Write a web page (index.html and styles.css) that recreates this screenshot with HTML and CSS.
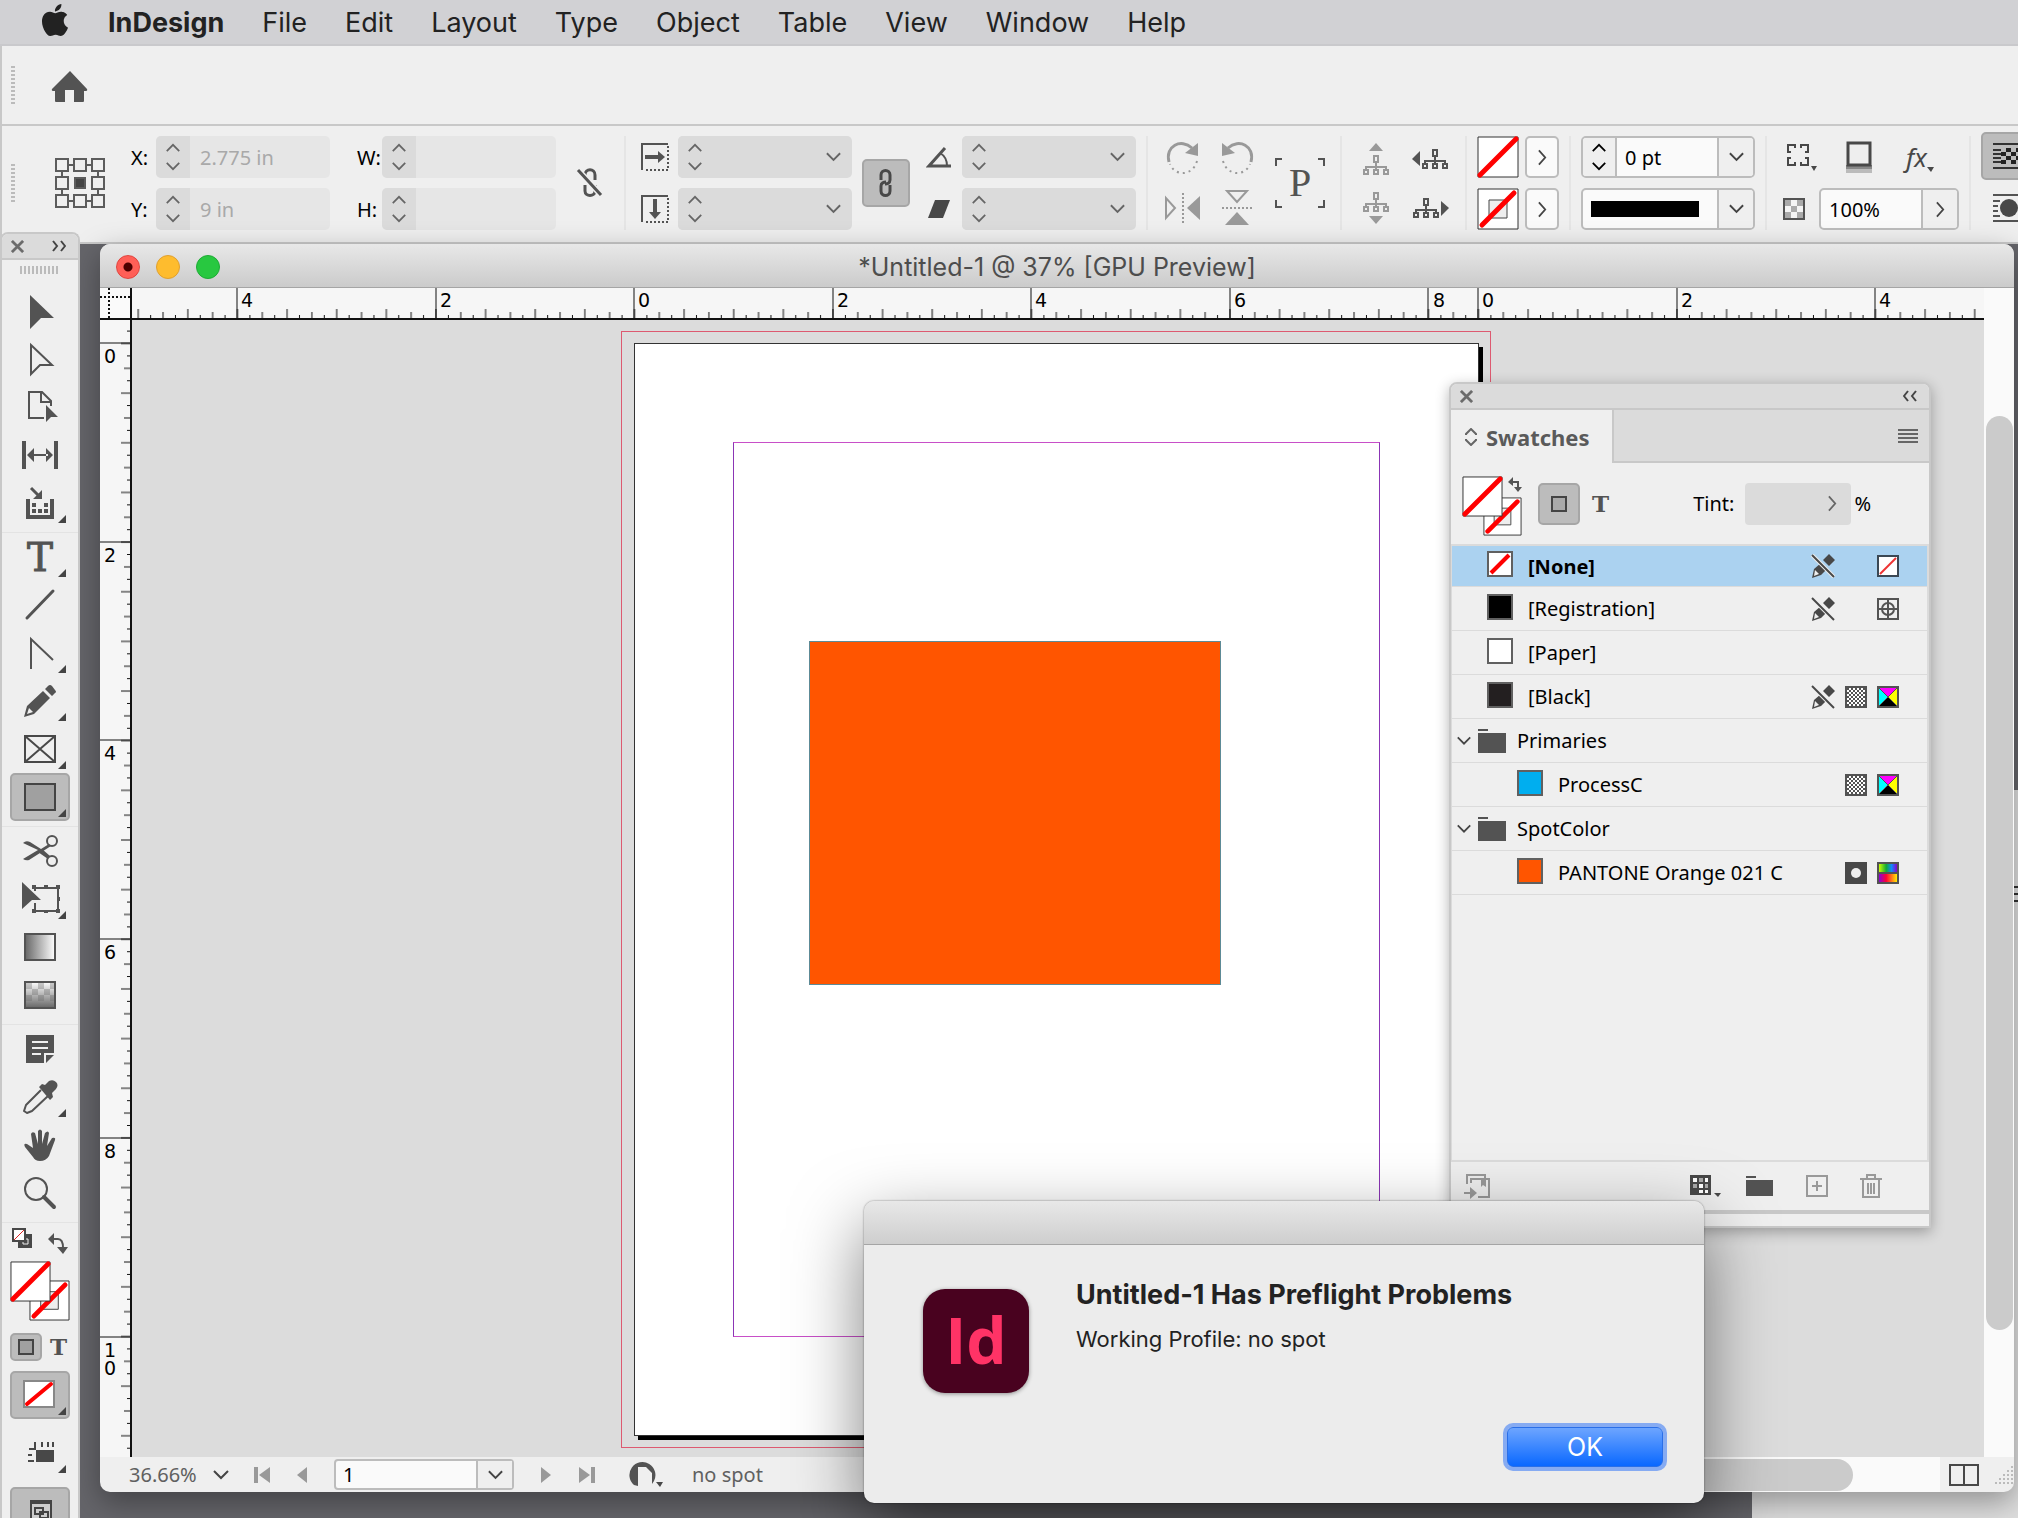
FILE: index.html
```html
<!DOCTYPE html>
<html lang="en">
<head>
    <meta charset="UTF-8">
    <meta name="viewport" content="width=device-width, initial-scale=1.0">
    <title>InDesign</title>
    <link rel="stylesheet" href="styles.css">
</head>
<body>
    <!-- shared symbols -->
    <svg class="defs" aria-hidden="true">
        <defs>
            <symbol id="up" viewBox="0 0 18 10"><path d="M2 9l7-7 7 7" fill="none" stroke="currentColor" stroke-width="2"/></symbol>
            <symbol id="down" viewBox="0 0 18 10"><path d="M2 1l7 7 7-7" fill="none" stroke="currentColor" stroke-width="2"/></symbol>
            <symbol id="right" viewBox="0 0 10 18"><path d="M1 1l7 8-7 8" fill="none" stroke="currentColor" stroke-width="2"/></symbol>
            <symbol id="corner" viewBox="0 0 8 8"><path d="M8 0v8H0z" fill="#444"/></symbol>
            <symbol id="close" viewBox="0 0 14 14"><path d="M1 1l12 12M13 1L1 13" stroke="#6b6b6b" stroke-width="3"/></symbol>
            <symbol id="folder" viewBox="0 0 28 24"><path d="M0 0h10v2H0zM0 4h28v20H0z" fill="#535353"/></symbol>
            <symbol id="locked" viewBox="0 0 24 24">
                <path d="M18 0l6 6-6 6-6-6zM10 9l6 6-6 6-9 3 2-9z" fill="currentColor"/>
                <path d="M4 16l4 4-5 2z" fill="#eee"/>
                <path d="M1 1l22 22" stroke="#efefef" stroke-width="4"/>
                <path d="M1 1l22 22" stroke="currentColor" stroke-width="2"/>
            </symbol>
            <pattern id="dither" width="4" height="4" patternUnits="userSpaceOnUse"><path d="M0 0h2v2H0zM2 2h2v2H2z" fill="#535353"/></pattern>
            <symbol id="process" viewBox="0 0 22 22"><path d="M1 1h20v20H1z" fill="#fff"/><path d="M1 1h20v20H1z" fill="url(#dither)" stroke="#535353" stroke-width="2"/></symbol>
            <symbol id="cmyk" viewBox="0 0 22 22">
                <path d="M1 1h20L11 11z" fill="#f0f"/><path d="M21 1v20L11 11z" fill="#ff0"/><path d="M1 21h20L11 11z" fill="#000"/><path d="M1 1v20l10-10z" fill="#0ff"/>
                <path d="M1 1l20 20M21 1L1 21" stroke="#535353" stroke-width="1"/><path d="M1 1h20v20H1z" fill="none" stroke="#535353" stroke-width="2"/>
            </symbol>
            <symbol id="tree" viewBox="0 0 26 20"><path d="M11 1h4v6h-4zM13 7v6M3 15v-3h20v3M1 15h4v4H1zM11 15h4v4h-4zM21 15h4v4h-4zM13 12v3" fill="none" stroke="currentColor" stroke-width="2"/></symbol>
            <symbol id="chain" viewBox="0 0 16 30"><path d="M3 12V7c0-6 9-6 9 0v5c0 3-3 4-5 4M12 17v6c0 6-9 6-9 0v-5c0-3 3-4 5-4" fill="none" stroke="#484848" stroke-width="3"/></symbol>
            <symbol id="fill-none" viewBox="0 0 42 42"><path d="M1 1h40v40H1z" fill="#fff" stroke="#333"/><path d="M3 39L39 3" stroke="#f00" stroke-width="5" stroke-linecap="round"/></symbol>
            <symbol id="stroke-none" viewBox="0 0 42 42"><path d="M1 1h40v40H1z" fill="#fff" stroke="#333"/><path d="M12 12h18v18H12z" fill="#eee" stroke="#444"/><path d="M5 37L37 5" stroke="#f00" stroke-width="5" stroke-linecap="round"/></symbol>
            <pattern id="ticks-x" width="99.25" height="30" x="502.5" patternUnits="userSpaceOnUse">
                <path d="M0 21v9M12.4 27v3M24.8 24v6M37.2 27v3M49.6 21v9M62 27v3M74.4 24v6M86.8 27v3M99.2 21v9" stroke="#111"/>
            </pattern>
            <pattern id="ticks-x2" width="99.25" height="30" x="1346.5" patternUnits="userSpaceOnUse">
                <path d="M0 21v9M12.4 27v3M24.8 24v6M37.2 27v3M49.6 21v9M62 27v3M74.4 24v6M86.8 27v3M99.2 21v9" stroke="#111"/>
            </pattern>
            <pattern id="ticks-y" width="30" height="99.3" y="23.5" patternUnits="userSpaceOnUse">
                <path d="M21 0h9M27 12.4h3M24 24.8h6M27 37.2h3M21 49.6h9M27 62h3M24 74.4h6M27 86.8h3M21 99.2h9" stroke="#111"/>
            </pattern>
        </defs>
    </svg>

    <header class="menubar">
        <svg class="apple" viewBox="0 0 24 24"><path d="M12.152 6.896c-.948 0-2.415-1.078-3.96-1.04-2.04.027-3.91 1.183-4.961 3.014-2.117 3.675-.546 9.103 1.519 12.09 1.013 1.454 2.208 3.09 3.792 3.039 1.52-.065 2.09-.987 3.935-.987 1.831 0 2.35.987 3.96.948 1.637-.026 2.676-1.48 3.676-2.948 1.156-1.688 1.636-3.325 1.662-3.415-.039-.013-3.182-1.221-3.22-4.857-.026-3.04 2.48-4.494 2.597-4.559-1.429-2.09-3.623-2.324-4.39-2.376-2-.156-3.675 1.09-4.61 1.09zM15.53 3.83c.843-1.012 1.4-2.427 1.245-3.83-1.207.052-2.662.805-3.532 1.818-.78.896-1.454 2.338-1.273 3.714 1.338.104 2.715-.688 3.559-1.701"/></svg>
        <nav class="menus">
            <a href="#" class="app-name">InDesign</a>
            <a href="#">File</a>
            <a href="#">Edit</a>
            <a href="#">Layout</a>
            <a href="#">Type</a>
            <a href="#">Object</a>
            <a href="#">Table</a>
            <a href="#">View</a>
            <a href="#">Window</a>
            <a href="#">Help</a>
        </nav>
    </header>

    <div class="app-bar">
        <div class="grip"></div>
        <button class="home" aria-label="Home"><svg width="38" height="32" viewBox="0 0 38 32"><path d="M19 0L1 18q-1 2 2 2h1v10q0 1 1 1h9V19h9v12h9q1 0 1-1V20h1q3 0 2-2z" fill="#535353"/></svg></button>
    </div>

    <div class="control-bar">
        <div class="grip"></div>
        <svg class="ref-point" width="52" height="52" viewBox="0 0 52 52" fill="none" stroke="#5c5c5c" stroke-width="2">
            <path d="M2 2h12v12H2zM20 2h12v12H20zM38 2h12v12H38zM2 20h12v12H2zM38 20h12v12H38zM2 38h12v12H2zM20 38h12v12H20zM38 38h12v12H38zM14 8h6M32 8h6M14 44h6M32 44h6M8 14v6M8 32v6M44 14v6M44 32v6"/>
            <path d="M21 21h10v10H21z" fill="#444" stroke="#5c5c5c"/>
        </svg>
        <div class="rows position">
            <div class="labeled"><label for="pos-x">X:</label>
                <div class="field off"><span class="stepper"><button aria-label="Up"><svg><use href="#up"/></svg></button><button aria-label="Down"><svg><use href="#down"/></svg></button></span><input id="pos-x" value="2.775 in" disabled></div></div>
            <div class="labeled"><label for="pos-y">Y:</label>
                <div class="field off"><span class="stepper"><button aria-label="Up"><svg><use href="#up"/></svg></button><button aria-label="Down"><svg><use href="#down"/></svg></button></span><input id="pos-y" value="9 in" disabled></div></div>
        </div>
        <div class="rows size">
            <div class="labeled"><label for="size-w">W:</label>
                <div class="field off"><span class="stepper"><button aria-label="Up"><svg><use href="#up"/></svg></button><button aria-label="Down"><svg><use href="#down"/></svg></button></span><input id="size-w" disabled></div></div>
            <div class="labeled"><label for="size-h">H:</label>
                <div class="field off"><span class="stepper"><button aria-label="Up"><svg><use href="#up"/></svg></button><button aria-label="Down"><svg><use href="#down"/></svg></button></span><input id="size-h" disabled></div></div>
        </div>
        <button class="unlink" aria-label="Constrain proportions">
            <svg width="28" height="32" viewBox="0 0 28 32" fill="none"><path d="M9 12V8c0-7 10-7 10 0v5M19 18v6c0 6-10 6-10 0v-6" stroke="#535353" stroke-width="3"/><path d="M2 3l23 25" stroke="#efefef" stroke-width="6"/><path d="M2 3l23 25" stroke="#535353" stroke-width="3"/></svg>
        </button>
        <div class="sep"></div>

        <div class="rows scale">
            <div class="labeled wide"><label for="scale-x" aria-label="Scale X"><svg width="28" height="28" viewBox="0 0 28 28" fill="none" stroke="#535353" stroke-width="2"><path d="M27 1H1v26"/><path d="M27 3v24H3" stroke-dasharray="2 2"/><path d="M4 14h14" stroke-width="4"/><path d="M17 8l7 6-7 6z" fill="#535353" stroke="none"/></svg></label>
                <div class="field combo off"><span class="stepper"><button aria-label="Up"><svg><use href="#up"/></svg></button><button aria-label="Down"><svg><use href="#down"/></svg></button></span><input id="scale-x" disabled><button class="drop" aria-label="Choose"><svg><use href="#down"/></svg></button></div></div>
            <div class="labeled wide"><label for="scale-y" aria-label="Scale Y"><svg width="28" height="28" viewBox="0 0 28 28" fill="none" stroke="#535353" stroke-width="2"><path d="M27 1H1v26"/><path d="M27 3v24H3" stroke-dasharray="2 2"/><path d="M14 4v14" stroke-width="4"/><path d="M8 17l6 7 6-7z" fill="#535353" stroke="none"/></svg></label>
                <div class="field combo off"><span class="stepper"><button aria-label="Up"><svg><use href="#up"/></svg></button><button aria-label="Down"><svg><use href="#down"/></svg></button></span><input id="scale-y" disabled><button class="drop" aria-label="Choose"><svg><use href="#down"/></svg></button></div></div>
        </div>
        <button class="toggle chain" aria-label="Constrain scaling"><svg width="16" height="30"><use href="#chain"/></svg></button>
        <div class="rows angle">
            <div class="labeled wide"><label for="rotate" aria-label="Rotation angle"><svg width="26" height="22" viewBox="0 0 26 22" fill="none" stroke="#535353"><path d="M19 2L3 20h22" stroke-width="3"/><path d="M14 7q7 4 7 13" stroke-width="2"/></svg></label>
                <div class="field combo off"><span class="stepper"><button aria-label="Up"><svg><use href="#up"/></svg></button><button aria-label="Down"><svg><use href="#down"/></svg></button></span><input id="rotate" disabled><button class="drop" aria-label="Choose"><svg><use href="#down"/></svg></button></div></div>
            <div class="labeled wide"><label for="shear" aria-label="Shear"><svg width="26" height="20" viewBox="0 0 26 20"><path d="M9 1h15l-7 18H2z" fill="#484848"/></svg></label>
                <div class="field combo off"><span class="stepper"><button aria-label="Up"><svg><use href="#up"/></svg></button><button aria-label="Down"><svg><use href="#down"/></svg></button></span><input id="shear" disabled><button class="drop" aria-label="Choose"><svg><use href="#down"/></svg></button></div></div>
        </div>
        <div class="sep"></div>

        <div class="icon-grid">
            <button aria-label="Rotate clockwise"><svg width="36" height="36" viewBox="0 0 36 36" fill="none" stroke="#999"><path d="M4 22C0 6 16-2 27 8" stroke-width="3"/><path d="M33 3v13l-13-3z" fill="#999" stroke="none"/><path d="M32 21c-4 15-22 16-27 3" stroke-width="2" stroke-dasharray="2 4"/></svg></button>
            <button aria-label="Rotate counterclockwise"><svg width="36" height="36" viewBox="0 0 36 36" fill="none" stroke="#999"><path d="M32 22C36 6 20-2 9 8" stroke-width="3"/><path d="M3 3v13l13-3z" fill="#999" stroke="none"/><path d="M4 21c4 15 22 16 27 3" stroke-width="2" stroke-dasharray="2 4"/></svg></button>
            <button aria-label="Flip horizontal"><svg width="36" height="36" viewBox="0 0 36 36" fill="none" stroke="#999" stroke-width="2"><path d="M1 8v20l9-10z"/><path d="M18 3v32" stroke-dasharray="2 2"/><path d="M35 6v24L22 18z" fill="#999" stroke="none"/></svg></button>
            <button aria-label="Flip vertical"><svg width="36" height="36" viewBox="0 0 36 36" fill="none" stroke="#999" stroke-width="2"><path d="M8 1h20l-10 11z"/><path d="M3 18h32" stroke-dasharray="2 2"/><path d="M6 35h24L18 22z" fill="#999" stroke="none"/></svg></button>
        </div>
        <div class="para">
            <svg width="52" height="52" viewBox="0 0 52 52" fill="none" stroke="#535353" stroke-width="2"><path d="M2 9V2h6M44 2h6v7M50 43v7h-6M8 50H2v-7"/></svg>
            <span>P</span>
        </div>
        <div class="sep"></div>

        <div class="icon-grid trees">
            <button class="dim" aria-label="Select container"><svg width="34" height="34" viewBox="0 0 34 34"><path d="M10 9l7-8 7 8z" fill="#999"/><use href="#tree" x="4" y="13" width="26" height="20"/></svg></button>
            <button aria-label="Select previous object"><svg width="38" height="34" viewBox="0 0 38 34"><path d="M9 9v15l-8-7z" fill="#535353"/><use href="#tree" x="11" y="7" width="26" height="20"/></svg></button>
            <button class="dim" aria-label="Select content"><svg width="34" height="34" viewBox="0 0 34 34"><use href="#tree" x="4" y="2" width="26" height="20"/><path d="M10 26l7 8 7-8z" fill="#999"/></svg></button>
            <button aria-label="Select next object"><svg width="38" height="34" viewBox="0 0 38 34"><use href="#tree" x="2" y="8" width="26" height="20"/><path d="M30 11v15l8-8z" fill="#535353"/></svg></button>
        </div>
        <div class="sep"></div>

        <div class="rows paint">
            <div class="pair"><svg width="42" height="42"><use href="#fill-none"/></svg><button class="more" aria-label="Fill"><svg><use href="#right"/></svg></button></div>
            <div class="pair"><svg width="42" height="42"><use href="#stroke-none"/></svg><button class="more" aria-label="Stroke"><svg><use href="#right"/></svg></button></div>
        </div>
        <div class="sep"></div>

        <div class="rows stroke">
            <div class="field combo"><span class="stepper"><button aria-label="Up"><svg><use href="#up"/></svg></button><button aria-label="Down"><svg><use href="#down"/></svg></button></span><input aria-label="Stroke weight" value="0 pt"><button class="drop" aria-label="Choose"><svg><use href="#down"/></svg></button></div>
            <button class="field stroke-type" aria-label="Stroke type"><span class="line"></span><span class="drop"><svg><use href="#down"/></svg></span></button>
        </div>
        <div class="sep"></div>

        <div class="rows effects">
            <div class="effect-icons">
                <button aria-label="Corner options"><svg width="32" height="30" viewBox="0 0 32 30" fill="none" stroke="#484848"><path d="M2 3h20v20H2z" stroke-width="2"/><path d="M9 3h6M9 23h6M2 10v6M22 10v6" stroke="#efefef" stroke-width="3"/><path d="M9 2v4M15 2v4M9 20v4M15 20v4M1 10h4M1 16h4M19 10h4M19 16h4" stroke-width="2"/><path d="M25 24h6l-3 5z" fill="#484848" stroke="none"/></svg></button>
                <button aria-label="Drop shadow"><svg width="28" height="32" viewBox="0 0 28 32"><path d="M1 24h26v8H1z" fill="#bbb"/><path d="M1 24h26v4H1z" fill="#888"/><path d="M3 2h22v22H3z" fill="#eee" stroke="#484848" stroke-width="3"/></svg></button>
                <button class="fx" aria-label="Effects">fx<svg width="7" height="5" viewBox="0 0 7 5"><path d="M0 0h7L4 5z" fill="#484848"/></svg></button>
            </div>
            <div class="opacity">
                <label for="opacity" aria-label="Opacity"><svg width="24" height="24" viewBox="0 0 24 24"><path d="M2 2h20v20H2z" fill="#f4f4f4" stroke="#535353" stroke-width="2"/><path d="M3 3h6v6H3zM15 3h6v6h-6zM9 9h6v6H9zM3 15h6v6H3zM15 15h6v6h-6z" fill="#aaa"/></svg></label>
                <div class="field"><input id="opacity" value="100%"><button class="drop" aria-label="Opacity slider"><svg class="side"><use href="#right"/></svg></button></div>
            </div>
        </div>
        <div class="sep"></div>

        <div class="wrap">
            <button class="toggle" aria-label="No text wrap"><svg width="40" height="28" viewBox="0 0 40 28" stroke="#333" stroke-width="2"><path d="M1 2h38M1 8h38M1 12h38M1 16h38M1 20h38M1 26h38"/><path d="M9 6h20v16H9z" fill="#222" stroke="none"/><path d="M9 6h5v4H9zM19 6h5v4h-5zM14 10h5v4h-5zM24 10h5v4h-5zM9 14h5v4H9zM19 14h5v4h-5zM14 18h5v4h-5zM24 18h5v4h-5z" fill="#bbb" stroke="none"/></svg></button>
            <button class="plain" aria-label="Wrap around object"><svg width="40" height="30" viewBox="0 0 40 30" stroke="#535353" stroke-width="2"><path d="M1 2h38M1 8h7M1 13h5M1 18h5M1 23h7M1 28h38"/><circle cx="17" cy="15" r="9" fill="#484848" stroke="none"/></svg></button>
        </div>
    </div>

    <main class="desktop">
        <div class="back-panel"><svg width="6" height="20" viewBox="0 0 6 20"><path d="M0 2h6M0 9h6M0 16h6" stroke="#333" stroke-width="2"/></svg></div>

        <section class="document">
            <div class="title-bar">
                <div class="lights"><button class="red" aria-label="Close"></button><button class="yellow" aria-label="Minimize"></button><button class="green" aria-label="Zoom"></button></div>
                <h1>*Untitled-1 @ 37% [GPU Preview]</h1>
            </div>
            <div class="view">
                <svg class="origin" viewBox="0 0 32 32"><path d="M0 9h30M9 0v30" stroke="#111" stroke-width="2" stroke-dasharray="2 2"/><path d="M0 31h32M31 0v32" stroke="#111" stroke-width="2"/></svg>
                <svg class="ruler ruler-x">
                    <rect width="1346" height="30" fill="url(#ticks-x)"/>
                    <rect x="1346" width="100%" height="30" fill="url(#ticks-x2)"/>
                    <path d="M105 0v30M304 0v30M502 0v30M701 0v30M899 0v30M1098 0v30M1296 0v30M1346 0v30M1545 0v30M1743 0v30" stroke="#111"/>
                    <text x="109" y="19">4</text><text x="308" y="19">2</text><text x="506" y="19">0</text><text x="705" y="19">2</text><text x="903" y="19">4</text><text x="1102" y="19">6</text><text x="1301" y="19">8</text><text x="1350" y="19">0</text><text x="1549" y="19">2</text><text x="1747" y="19">4</text>
                </svg>
                <div class="rail"></div>
                <svg class="ruler ruler-y">
                    <rect width="30" height="100%" fill="url(#ticks-y)"/>
                    <path d="M0 23h30M0 222h30M0 420h30M0 619h30M0 818h30M0 1017h30" stroke="#111"/>
                    <text x="4" y="43">0</text><text x="4" y="242">2</text><text x="4" y="440">4</text><text x="4" y="639">6</text><text x="4" y="838">8</text><text x="4" y="1037">1</text><text x="4" y="1055">0</text>
                </svg>
                <div class="canvas">
                    <div class="bleed"></div>
                    <div class="page"></div>
                    <div class="margins"></div>
                    <div class="shape"></div>
                </div>
                <div class="scroll-y"><div class="thumb"></div></div>
            </div>
            <footer class="status">
                <select aria-label="Zoom level"><option>36.66%</option></select>
                <button class="first" aria-label="First page"><svg width="18" height="18" viewBox="0 0 18 18"><path d="M1 1h4v16H1zM17 1v16L6 9z" fill="#999"/></svg></button>
                <button class="prev" aria-label="Previous page"><svg width="10" height="18" viewBox="0 0 10 18"><path d="M10 1v16L0 9z" fill="#999"/></svg></button>
                <div class="page-number"><input aria-label="Page" value="1"><button class="drop" aria-label="Choose page"><svg><use href="#down"/></svg></button></div>
                <button class="next" aria-label="Next page"><svg width="10" height="18" viewBox="0 0 10 18"><path d="M0 1v16l10-8z" fill="#999"/></svg></button>
                <button class="last" aria-label="Last page"><svg width="18" height="18" viewBox="0 0 18 18"><path d="M13 1h4v16h-4zM1 1v16l11-8z" fill="#999"/></svg></button>
                <button class="preflight" aria-label="Preflight"><svg width="36" height="28" viewBox="0 0 36 28"><path d="M6 24A13 13 0 1 1 26 20l-2 3V12l-6-6H10v19z" fill="#535353"/><path d="M11 8h6v7h6v8l-2 2H11z" fill="#efefef"/><path d="M19 8l5 5h-5z" fill="#efefef"/><path d="M28 21h7l-3 5z" fill="#484848"/></svg></button>
                <span class="profile">no spot</span>
                <div class="scroll-x"><div class="thumb"></div></div>
                <button class="split" aria-label="Split view"><svg width="30" height="24" viewBox="0 0 30 24"><path d="M1 2h28v20H1zM15 2v20" fill="none" stroke="#484848" stroke-width="2"/></svg></button>
                <svg class="resize" width="20" height="20" viewBox="0 0 20 20"><path d="M18 1v18M14 5v14M10 9v10M6 13v6M2 17v2" stroke="#bbb" stroke-width="2" stroke-dasharray="2 2"/></svg>
            </footer>
        </section>

        <aside class="toolbox">
            <div class="toolbox-head"><button aria-label="Close"><svg width="13" height="13"><use href="#close"/></svg></button><button aria-label="Collapse"><svg width="14" height="12" viewBox="0 0 14 12"><path d="M1 1l4 5-4 5M9 1l4 5-4 5" fill="none" stroke="#444" stroke-width="2"/></svg></button></div>
            <div class="drag"></div>
            <div class="tools">
                <button aria-label="Selection"><svg viewBox="-10 -4 60 48"><path d="M10 4l24 23H21L10 38z" fill="#535353"/></svg></button>
                <button aria-label="Direct selection"><svg viewBox="-10 -4 60 48"><path d="M11 6l21 20H20l-9 9z" fill="none" stroke="#535353" stroke-width="2"/></svg></button>
                <button aria-label="Page"><svg viewBox="-10 -4 60 48"><path d="M24 31H9V5h13l9 9v5M21 5v10h10" fill="none" stroke="#535353" stroke-width="2"/><path d="M26 18l12 12h-7l-5 5z" fill="#535353"/></svg></button>
                <button aria-label="Gap"><svg viewBox="-10 -4 60 48"><path d="M2 6h4v28H2zM34 6h4v28h-4zM7 20l7-7v14zM33 20l-7-7v14zM12 19h16v2H12z" fill="#535353"/></svg></button>
                <button aria-label="Content collector"><svg viewBox="-10 -4 60 48"><path d="M8 16v18h24V16" fill="none" stroke="#535353" stroke-width="4"/><path d="M11 5l8 8" stroke="#535353" stroke-width="3"/><path d="M22 7v9h-9zM12 20h4v4h-4zM24 20h4v4h-4zM12 26h4v4h-4zM18 26h4v4h-4zM24 26h4v4h-4z" fill="#535353"/><use href="#corner" x="38" y="32" width="8" height="8"/></svg></button>
            </div>
            <div class="tools">
                <button class="type" aria-label="Type"><svg viewBox="-10 -4 60 48"><text x="20" y="34" text-anchor="middle" font-size="39">T</text><use href="#corner" x="38" y="32" width="8" height="8"/></svg></button>
                <button aria-label="Line"><svg viewBox="-10 -4 60 48"><path d="M7 33L33 6" stroke="#535353" stroke-width="3" stroke-linecap="round"/></svg></button>
                <button aria-label="Pen"><svg viewBox="-10 -4 60 48"><path d="M11 36V6l22 21" fill="none" stroke="#535353" stroke-width="2"/><use href="#corner" x="38" y="32" width="8" height="8"/></svg></button>
                <button aria-label="Pencil"><svg viewBox="-10 -4 60 48"><path d="M28 5q2-2 4 0l3 4q2 2 0 3l-3 3-7-7zM23 10l7 7-16 16-10 3 3-11z" fill="#535353"/><path d="M9 27l4 4-6 2z" fill="#efefef"/><use href="#corner" x="38" y="32" width="8" height="8"/></svg></button>
                <button aria-label="Rectangle frame"><svg viewBox="-10 -4 60 48"><path d="M5 7h30v26H5zM5 7l30 26M35 7L5 33" fill="none" stroke="#484848" stroke-width="2"/><use href="#corner" x="38" y="32" width="8" height="8"/></svg></button>
                <button class="active" aria-label="Rectangle"><svg viewBox="-10 -4 60 48"><path d="M5 7h30v26H5z" fill="#a0a0a0" stroke="#444" stroke-width="2"/><use href="#corner" x="38" y="32" width="8" height="8"/></svg></button>
            </div>
            <div class="tools">
                <button aria-label="Scissors"><svg viewBox="-10 -4 60 48" fill="none" stroke="#535353"><circle cx="32" cy="10" r="5" stroke-width="2"/><circle cx="32" cy="30" r="5" stroke-width="2"/><path d="M3 12q3-3 7-1l11 7 8-5 2 2-22 14q-3 1-6-1l15-9zM22 18l8 7-2 3-10-7z" fill="#535353" stroke="none"/></svg></button>
                <button aria-label="Free transform"><svg viewBox="-10 -4 60 48"><path d="M15 12V9h23v23H15v-8" fill="none" stroke="#535353" stroke-width="2"/><path d="M12 6h4v4h-4zM24 6h4v3h-4zM36 6h4v4h-4zM37 18h3v4h-3zM36 30h4v4h-4zM24 31h4v3h-4zM12 30h4v4h-4z" fill="#535353"/><path d="M2 3l19 18h-9l-10 9z" fill="#535353"/><use href="#corner" x="38" y="32" width="8" height="8"/></svg></button>
                <button aria-label="Gradient swatch"><svg viewBox="-10 -4 60 48"><linearGradient id="grad"><stop stop-color="#666"/><stop offset="1" stop-color="#fff"/></linearGradient><path d="M5 7h30v26H5z" fill="url(#grad)" stroke="#535353" stroke-width="2"/></svg></button>
                <button aria-label="Gradient feather"><svg viewBox="-10 -4 60 48"><linearGradient id="feather" x2="0" y2="1"><stop stop-color="#666" stop-opacity="0"/><stop offset="1" stop-color="#666"/></linearGradient><path d="M5 7h30v26H5z" fill="#fff"/><path d="M6 8h6v6H6zM18 8h6v6h-6zM30 8h4v6h-4zM12 14h6v6h-6zM24 14h6v6h-6zM6 20h6v6H6zM18 20h6v6h-6zM30 20h4v6h-4z" fill="#ccc"/><path d="M5 7h30v26H5z" fill="url(#feather)" stroke="#535353" stroke-width="2"/></svg></button>
            </div>
            <div class="tools">
                <button aria-label="Note"><svg viewBox="-10 -4 60 48"><path d="M6 6h28v18H24v10H6z" fill="#535353"/><path d="M12 13h16M12 19h16M12 25h9" stroke="#efefef" stroke-width="2"/><path d="M26 26h8l-8 8z" fill="#535353"/></svg></button>
                <button aria-label="Eyedropper"><svg viewBox="-10 -4 60 48"><path d="M21 13L6 28l-2 6 3 2 5-2 16-15" fill="none" stroke="#535353" stroke-width="2" stroke-linejoin="round"/><path d="M19 10l3-3 3 1 4-4q4-2 7 1t0 7l-4 4 1 4-3 3z" fill="#535353"/><use href="#corner" x="38" y="32" width="8" height="8"/></svg></button>
                <button aria-label="Hand"><svg viewBox="-10 -4 60 48"><path d="M13 32L5 22q-2-4 2-3l6 4-2-14q1-3 4-1l3 11V6q2-3 4 0v13l3-11q3-3 4 0l-2 13 5-8q4-1 3 2l-6 16q-3 5-9 5-5 0-7-4z" fill="#535353"/></svg></button>
                <button aria-label="Zoom"><svg viewBox="-10 -4 60 48"><circle cx="16" cy="16" r="11" fill="none" stroke="#535353" stroke-width="2"/><path d="M24 24l10 10" stroke="#535353" stroke-width="4" stroke-linecap="round"/></svg></button>
            </div>
            <div class="tools colors">
                <div class="color-head">
                    <button aria-label="Default fill and stroke"><svg width="20" height="20" viewBox="0 0 20 20"><path d="M6 6h14v14H6z" fill="#484848"/><path d="M11 11h5v5h-5z" fill="none" stroke="#eee"/><path d="M1 1h12v12H1z" fill="#fff" stroke="#484848" stroke-width="2"/><path d="M2 12L12 2" stroke="#d22" stroke-width="1"/></svg></button>
                    <button aria-label="Swap fill and stroke"><svg width="22" height="22" viewBox="0 0 22 22"><path d="M5 6h6q5 0 5 9" fill="none" stroke="#535353" stroke-width="2"/><path d="M1 6l6-6v12zM10 14h11l-5 7z" fill="#535353"/></svg></button>
                </div>
                <svg class="swatch-pair" viewBox="0 0 60 60"><use href="#stroke-none" x="19" y="19" width="41" height="41"/><use href="#fill-none" width="41" height="41"/></svg>
                <div class="color-target">
                    <button class="toggle" aria-label="Container"><svg width="18" height="18" viewBox="0 0 18 18"><path d="M2 2h14v14H2z" fill="#a0a0a0" stroke="#444" stroke-width="2"/></svg></button>
                    <button class="letter">T</button>
                </div>
                <button class="active apply" aria-label="Apply none"><svg viewBox="0 0 60 48"><path d="M14 10h30v26H14z" fill="#fff" stroke="#888" stroke-width="2"/><path d="M17 33l24-20" stroke="#f00" stroke-width="4" stroke-linecap="round"/><use href="#corner" x="48" y="36" width="8" height="8"/></svg></button>
                <button class="view-options" aria-label="View options"><svg viewBox="0 0 60 48"><path d="M26 21h18v12H26zM24 13h2v8h-7v-2h5zM31 13h2v5h-2zM37 13h2v5h-2zM42 13h2v5h-2zM18 25h4v2h-4zM18 31h6v2h-6z" fill="#484848"/><use href="#corner" x="48" y="36" width="8" height="8"/></svg></button>
                <button class="active" aria-label="Screen mode"><svg viewBox="0 0 60 48"><path d="M21 14h20v24H21z" fill="#ccc" stroke="#444" stroke-width="2"/><path d="M20 13h22v4H20z" fill="#444"/><path d="M25 21h8v6h-8zM30 25h8v6h-8z" fill="none" stroke="#444" stroke-width="2"/></svg></button>
            </div>
        </aside>

        <section class="swatches">
            <div class="panel-head"><button aria-label="Close"><svg width="13" height="13"><use href="#close"/></svg></button><button aria-label="Collapse"><svg width="14" height="12" viewBox="0 0 14 12"><path d="M5 1L1 6l4 5M13 1L9 6l4 5" fill="none" stroke="#444" stroke-width="2"/></svg></button></div>
            <div class="tab-row">
                <h2 class="tab"><svg width="12" height="18" viewBox="0 0 12 18"><path d="M1 7V6l5-5 5 5v1M1 11v1l5 5 5-5v-1" fill="none" stroke="#666" stroke-width="2"/></svg>Swatches</h2>
                <button class="panel-menu" aria-label="Panel menu"><svg width="20" height="14" viewBox="0 0 20 14"><path d="M0 1h20M0 5h20M0 9h20M0 13h20" stroke="#666" stroke-width="2"/></svg></button>
            </div>
            <div class="tint-row">
                <svg class="mini-pair" width="62" height="60" viewBox="0 0 62 60"><use href="#stroke-none" x="21" y="21" width="39" height="39"/><use href="#fill-none" width="41" height="41"/><path d="M50 6h6v6" fill="none" stroke="#535353" stroke-width="2"/><path d="M46 6l5-5v9zM52 11h8l-4 5z" fill="#535353"/></svg>
                <button class="toggle" aria-label="Container"><svg width="16" height="16" viewBox="0 0 16 16"><path d="M1 1h14v14H1z" fill="#aaa" stroke="#444" stroke-width="2"/></svg></button>
                <button class="letter">T</button>
                <label for="tint">Tint:</label>
                <div class="tint-field"><input id="tint" disabled><button aria-label="Tint slider"><svg><use href="#right"/></svg></button></div>
                <span>%</span>
            </div>
            <ul class="swatch-list">
                <li class="selected"><span class="chip none"><svg viewBox="0 0 22 22"><path d="M2 20L20 2" stroke="#f00" stroke-width="4"/></svg></span><span class="name">[None]</span><svg class="lock"><use href="#locked"/></svg><i></i><svg viewBox="0 0 22 22"><path d="M1 1h20v20H1z" fill="#fff" stroke="#3b4854" stroke-width="2"/><path d="M3 19L19 3" stroke="#e33" stroke-width="2"/></svg></li>
                <li><span class="chip registration"></span><span class="name">[Registration]</span><svg class="lock"><use href="#locked"/></svg><i></i><svg viewBox="0 0 22 22" fill="none" stroke="#535353" stroke-width="2"><path d="M1 1h20v20H1zM11 1v20M1 11h20"/><circle cx="11" cy="11" r="6"/></svg></li>
                <li><span class="chip paper"></span><span class="name">[Paper]</span></li>
                <li><span class="chip black"></span><span class="name">[Black]</span><svg class="lock"><use href="#locked"/></svg><svg><use href="#process"/></svg><svg><use href="#cmyk"/></svg></li>
                <li class="group"><svg class="twist"><use href="#down"/></svg><svg class="folder"><use href="#folder"/></svg><span class="name">Primaries</span></li>
                <li class="child"><span class="chip cyan"></span><span class="name">ProcessC</span><svg><use href="#process"/></svg><svg><use href="#cmyk"/></svg></li>
                <li class="group"><svg class="twist"><use href="#down"/></svg><svg class="folder"><use href="#folder"/></svg><span class="name">SpotColor</span></li>
                <li class="child"><span class="chip orange"></span><span class="name">PANTONE Orange 021 C</span><svg viewBox="0 0 22 22"><path d="M0 0h22v22H0z" fill="#484848"/><circle cx="11" cy="11" r="5" fill="#eee"/></svg><svg viewBox="0 0 22 22"><linearGradient id="spot-a"><stop stop-color="#cf0"/><stop offset=".4" stop-color="#1a3"/><stop offset=".7" stop-color="#18f"/><stop offset="1" stop-color="#80c"/></linearGradient><linearGradient id="spot-b"><stop stop-color="#80d"/><stop offset=".4" stop-color="#f03"/><stop offset="1" stop-color="#fe0"/></linearGradient><path d="M0 0h22v22H0z" fill="#535353"/><path d="M2 2h18v8H2z" fill="url(#spot-a)"/><path d="M2 12h18v8H2z" fill="url(#spot-b)"/></svg></li>
            </ul>
            <div class="panel-foot">
                <button class="add-library" aria-label="Add to library"><svg width="26" height="26" viewBox="0 0 26 26" fill="none" stroke="#999" stroke-width="2"><path d="M3 11V2h18v3M7 10V6h18v18H14"/><path d="M17 6h5v8l-3-2-2 2z" fill="#999" stroke="none"/><path d="M0 20h7" stroke-width="2"/><path d="M6 14l7 6-7 6z" fill="#999" stroke="none"/></svg></button>
                <button class="kinds" aria-label="Swatch views"><svg width="32" height="24" viewBox="0 0 32 24"><path d="M0 1h21v20H0z" fill="#484848"/><path d="M3 4h4v4H3zM15 4h3v4h-3zM9 10h4v4H9zM9 16h4v3H9zM15 16h3v3h-3z" fill="#fff"/><path d="M9 4h4v4H9zM3 10h4v4H3zM15 10h3v4h-3z" fill="#aaa"/><path d="M24 19h7l-3 4z" fill="#484848"/></svg></button>
                <button class="new-group" aria-label="New color group"><svg width="28" height="20" viewBox="0 0 28 20"><path d="M0 0h10v2H0zM0 4h27v16H0z" fill="#535353"/></svg></button>
                <button class="new-swatch" aria-label="New swatch"><svg width="22" height="22" viewBox="0 0 22 22"><path d="M1 1h20v20H1zM11 6v10M6 11h10" fill="none" stroke="#999" stroke-width="2"/></svg></button>
                <button class="trash" aria-label="Delete swatch"><svg width="22" height="24" viewBox="0 0 22 24"><path d="M0 5h22M7 5V1h8v4M3 5v18h16V5M8 9v11M11 9v11M14 9v11" fill="none" stroke="#999" stroke-width="2"/></svg></button>
            </div>
            <div class="dock-edge"></div>
        </section>

        <div class="dialog" role="alertdialog" aria-labelledby="alert-title">
            <div class="dialog-bar"></div>
            <div class="dialog-body">
                <div class="app-icon">Id</div>
                <div class="message">
                    <h2 id="alert-title">Untitled-1 Has Preflight Problems</h2>
                    <p>Working Profile: no spot</p>
                </div>
            </div>
            <div class="dialog-actions"><button>OK</button></div>
        </div>
    </main>
</body>
</html>
```

FILE: styles.css
```css
* {
    box-sizing: border-box;
}
body {
    margin: 0;
    height: 100vh;
    display: flex;
    flex-direction: column;
    overflow: hidden;
    background-color: #efefef;
    color: #000;
    font-family: "Noto Sans", sans-serif;
    font-size: 20px;
}
button, input, select {
    font: inherit;
    color: inherit;
    margin: 0;
    padding: 0;
    border: none;
    background: none;
    border-radius: 0;
}
button {
    display: flex;
    align-items: center;
    justify-content: center;
}
svg {
    display: block;
    flex: none;
}
h1, h2, p, ul {
    margin: 0;
    padding: 0;
}
.defs {
    position: absolute;
    width: 0;
    height: 0;
}

/* menu bar */
.menubar {
    flex: none;
    display: flex;
    align-items: center;
    height: 46px;
    padding-left: 39px;
    background-color: #d1d1d4;
    border-bottom: 2px solid #c9c9cc;
    font-family: Inter, sans-serif;
    font-size: 27px;
}
.apple {
    width: 32px;
    height: 32px;
    fill: #222;
    margin-bottom: 4px;
}
.menus {
    display: flex;
    gap: 38px;
    margin-left: 37px;
}
.menus a {
    color: #222;
    text-decoration: none;
}
.menus .app-name {
    font-weight: 700;
}

/* app bar and control bar */
.app-bar, .control-bar {
    flex: none;
    display: flex;
    border-left: 2px solid #c8c8c8;
    border-bottom: 2px solid #c8c8c8;
    background-color: #efefef;
}
.app-bar {
    align-items: center;
    height: 80px;
}
.grip {
    flex: none;
    width: 4px;
    height: 38px;
    margin-left: 9px;
    background: repeating-linear-gradient(#bbb 0 2px, transparent 2px 4px);
}
.home {
    margin: 3px 0 0 36px;
}
.control-bar {
    height: 118px;
    padding: 10px 0 12px;
    align-items: center;
}
.control-bar > * {
    flex: none;
}
.rows {
    display: grid;
    grid-template-rows: 42px 42px;
    gap: 10px;
}
.ref-point {
    margin-left: 39px;
}
.position {
    margin-left: 25px;
}
.size {
    margin-left: 27px;
}
.labeled {
    display: flex;
    align-items: center;
}
.labeled label {
    width: 25px;
}
.labeled.wide label {
    width: 37px;
}
.field {
    display: flex;
    width: 174px;
    height: 42px;
    border: 2px solid #bcbcbc;
    border-radius: 5px;
    background-color: #fafafa;
    overflow: hidden;
}
.field input {
    flex: 1;
    min-width: 0;
    padding-left: 8px;
}
.field.off {
    border: none;
    background-color: #e6e6e6;
}
.field.off input {
    color: #a9a9a9;
    padding-left: 10px;
}
.stepper {
    flex: none;
    width: 34px;
    display: flex;
    flex-direction: column;
    align-items: center;
    justify-content: center;
    gap: 10px;
    background-color: #efefef;
    border-right: 2px solid #bcbcbc;
}
.stepper svg {
    width: 16px;
    height: 9px;
}
.off .stepper {
    background-color: #dbdbdb;
    color: #666;
    border: none;
}
.field.combo.off {
    background-color: #dbdbdb;
}
.drop {
    flex: none;
    display: flex;
    align-items: center;
    justify-content: center;
    width: 36px;
    background-color: #efefef;
    border-left: 2px solid #bcbcbc;
    color: #444;
}
.off .drop {
    background: none;
    border: none;
    width: 38px;
    color: #666;
}
.drop svg {
    width: 17px;
    height: 10px;
}
.drop svg.side {
    width: 9px;
    height: 17px;
}
.unlink {
    margin: 0 10px 0 20px;
}
.sep {
    width: 2px;
    height: 94px;
    margin: 0 10px;
    background-color: #e5e5e5;
}
.scale {
    margin-left: 5px;
}
.toggle {
    width: 48px;
    height: 48px;
    border: 2px solid #a6a6a6;
    border-radius: 5px;
    background-color: #bcbcbc;
}
.chain {
    margin: 0 16px 0 10px;
}
.angle .labeled.wide label {
    width: 36px;
}
.icon-grid {
    display: grid;
    grid-template-columns: 36px 36px;
    gap: 14px 18px;
    margin-left: 7px;
}
.para {
    display: grid;
    place-items: center;
    margin: 0 4px 0 19px;
    color: #535353;
    font-family: "Liberation Serif", serif;
    font-size: 40px;
    line-height: 52px;
}
.para > * {
    grid-area: 1 / 1;
}
.icon-grid.trees {
    grid-template-columns: 34px 38px;
    margin-right: 6px;
    color: #535353;
}
.dim {
    color: #999;
}
.pair {
    display: flex;
    gap: 6px;
}
.more {
    width: 34px;
    border: 2px solid #bcbcbc;
    border-radius: 5px;
    background-color: #fafafa;
    color: #444;
}
.more svg {
    width: 9px;
    height: 17px;
}
.stroke-type .line {
    flex: 1;
    height: 16px;
    margin: 0 18px 0 8px;
    background-color: #000;
}
.stroke-type .drop {
    align-self: stretch;
}
.effects {
    margin-left: 5px;
}
.effect-icons {
    display: flex;
    align-items: center;
    gap: 27px;
    padding-left: 4px;
}
.fx {
    align-items: flex-end;
    margin-left: 6px;
    color: #484848;
    font-style: italic;
    font-size: 26px;
    line-height: 30px;
}
.opacity {
    display: flex;
    align-items: center;
    gap: 13px;
}
.opacity .field {
    width: 140px;
}
.wrap {
    display: flex;
    flex-direction: column;
    align-self: flex-start;
    width: 48px;
    margin-top: -4px;
    gap: 4px;
}
.wrap .toggle, .plain {
    width: 60px;
    height: 48px;
    justify-content: flex-start;
    padding-left: 9px;
}
.plain {
    padding-left: 11px;
}

/* desktop */
.desktop {
    position: relative;
    flex: 1;
    min-height: 0;
    background-color: #65656a;
}
.back-panel {
    position: absolute;
    left: 1752px;
    right: 0;
    top: 546px;
    bottom: 0;
    display: flex;
    justify-content: flex-end;
    padding-top: 95px;
    background-color: #dedede;
}

/* document window */
.document {
    position: absolute;
    left: 100px;
    right: 4px;
    top: 0;
    bottom: 26px;
    display: flex;
    flex-direction: column;
    border-radius: 10px;
    background-color: #efefef;
    box-shadow: 0 10px 30px rgba(0, 0, 0, 0.35);
    overflow: hidden;
}
.title-bar {
    flex: none;
    display: grid;
    grid-template-columns: 1fr auto 1fr;
    align-items: center;
    height: 44px;
    padding: 3px 16px 0;
    background: linear-gradient(#e8e8e8, #cbcbcb);
    border-bottom: 1px solid #a5a5a5;
}
.title-bar h1 {
    color: #4d4d4d;
    font-family: Inter, sans-serif;
    font-size: 25px;
    font-weight: 400;
}
.lights {
    display: flex;
    gap: 16px;
}
.lights button {
    width: 24px;
    height: 24px;
    border-radius: 50%;
    border: 1px solid;
}
.lights .red {
    background: radial-gradient(circle, #4d0000 0 4px, #ff5f57 5px);
    border-color: #e0443e;
}
.lights .yellow {
    background-color: #febc2e;
    border-color: #e0a030;
}
.lights .green {
    background-color: #28c840;
    border-color: #1eab35;
}
.view {
    flex: 1;
    min-height: 0;
    display: grid;
    grid-template: 32px 1fr / 32px 1fr 30px;
}
.origin {
    width: 32px;
    height: 32px;
    background-color: #fafafa;
}
.ruler {
    background-color: #f6f6f6;
    overflow: hidden;
}
.ruler text {
    font-family: "DejaVu Sans", sans-serif;
    font-size: 19px;
}
.ruler-x {
    width: 100%;
    height: 32px;
    border-bottom: 2px solid #111;
}
.ruler-y {
    width: 32px;
    height: 100%;
    border-right: 2px solid #111;
}
.canvas {
    position: relative;
    background-color: #dcdcdc;
    overflow: hidden;
}
.canvas > * {
    position: absolute;
}
.bleed {
    left: 489px;
    top: 11px;
    width: 870px;
    height: 1117px;
    border: 1px solid #dd5a70;
}
.page {
    left: 502px;
    top: 23px;
    width: 845px;
    height: 1093px;
    border: 1px solid #333;
    background-color: #fff;
    box-shadow: 4px 4px 0 #000;
}
.margins {
    left: 601px;
    top: 122px;
    width: 647px;
    height: 895px;
    border: 1px solid #8b35b5;
    border-bottom-color: #c84fc8;
    border-top-color: #c84fc8;
}
.shape {
    left: 677px;
    top: 321px;
    width: 412px;
    height: 344px;
    background-color: #ff5500;
    border: 1px solid #5d8a96;
}
.rail, .scroll-y {
    background-color: #fafafa;
}
.scroll-y {
    padding: 96px 1px 0 2px;
}
.scroll-y .thumb {
    height: 914px;
    border-radius: 14px;
    background-color: #cbcbcb;
}
.status {
    flex: none;
    display: flex;
    align-items: center;
    height: 35px;
    padding-left: 29px;
    color: #606060;
}
.status select {
    appearance: none;
    width: 101px;
    background: url("data:image/svg+xml,%3Csvg xmlns='http://www.w3.org/2000/svg' width='18' height='10'%3E%3Cpath d='M2 1l7 7 7-7' fill='none' stroke='%23444' stroke-width='2'/%3E%3C/svg%3E") no-repeat right center;
}
.status .first {
    margin-left: 23px;
}
.status .prev {
    margin-left: 26px;
}
.page-number {
    display: flex;
    width: 180px;
    height: 31px;
    margin-left: 27px;
    border: 2px solid #bcbcbc;
    border-radius: 4px;
    background-color: #fafafa;
    color: #000;
}
.page-number input {
    flex: 1;
    min-width: 0;
    padding-left: 7px;
}
.status .next {
    margin-left: 27px;
}
.status .last {
    margin-left: 27px;
}
.preflight {
    margin-left: 32px;
}
.profile {
    margin: 0 30px 0 28px;
}
.scroll-x {
    flex: 1;
    align-self: stretch;
    margin-left: 110px;
    padding: 2px 87px 1px 0;
    background-color: #fafafa;
}
.scroll-x .thumb {
    height: 32px;
    border-radius: 16px;
    background-color: #cbcbcb;
}
.split {
    margin: 0 15px 0 9px;
}

/* toolbox */
.toolbox {
    position: absolute;
    left: 0;
    top: -12px;
    bottom: 0;
    width: 80px;
    overflow: hidden;
    border: 2px solid #c8c8c8;
    border-bottom: none;
    border-radius: 8px 8px 0 0;
    background-color: #efefef;
}
.toolbox-head, .panel-head {
    display: flex;
    align-items: center;
    justify-content: space-between;
    height: 26px;
    padding: 0 12px 0 9px;
    background-color: #dbdbdb;
    border-bottom: 2px solid #c8c8c8;
}
.drag {
    width: 38px;
    height: 8px;
    margin: 6px auto 13px 18px;
    background: repeating-linear-gradient(90deg, #bbb 0 2px, transparent 2px 4px);
}
.tools {
    padding: 0 8px 5px;
    border-bottom: 1px solid #e3e3e3;
}
.tools > button {
    width: 60px;
    height: 48px;
}
.tools > button svg {
    width: 60px;
    height: 48px;
}
.tools .active {
    border: 2px solid #a6a6a6;
    border-radius: 5px;
    background-color: #bcbcbc;
}
.type text, .letter {
    font-family: "DejaVu Serif", serif;
    fill: #535353;
    color: #535353;
}
.type text {
    stroke: #535353;
    stroke-width: 1px;
}
.colors {
    border: none;
    padding-top: 5px;
}
.color-head {
    display: flex;
    justify-content: space-between;
    padding: 0 1px 0 2px;
    height: 33px;
    align-items: flex-start;
}
.color-head button:last-child {
    padding-top: 5px;
}
.swatch-pair {
    width: 60px;
    height: 60px;
}
.color-target {
    display: flex;
    justify-content: space-between;
    margin: 12px 0 10px;
    padding-right: 3px;
}
.color-target .toggle {
    width: 32px;
    height: 28px;
}
.letter {
    font-size: 23px;
    font-weight: 700;
    line-height: 28px;
}
.tools .view-options {
    margin: 10px 0;
}

/* swatches panel */
.swatches {
    position: absolute;
    left: 1449px;
    top: 138px;
    width: 482px;
    height: 846px;
    display: flex;
    flex-direction: column;
    border: 2px solid #c8c8c8;
    border-radius: 8px 8px 0 0;
    background-color: #efefef;
    box-shadow: 0 4px 14px rgba(0, 0, 0, 0.3);
}
.panel-head {
    flex: none;
    border-radius: 6px 6px 0 0;
}
.tab-row {
    flex: none;
    display: flex;
    height: 53px;
}
.tab {
    display: flex;
    align-items: center;
    gap: 9px;
    padding: 0 22px 0 14px;
    border-right: 2px solid #c8c8c8;
    color: #5a5a5a;
    font-size: 22px;
    font-weight: 700;
}
.panel-menu {
    flex: 1;
    justify-content: flex-end;
    padding-right: 11px;
    background-color: #dbdbdb;
    border-bottom: 2px solid #c8c8c8;
}
.tint-row {
    flex: none;
    display: flex;
    align-items: center;
    height: 81px;
    padding-left: 11px;
}
.mini-pair {
    margin-top: 4px;
}
.tint-row .toggle {
    width: 42px;
    height: 42px;
    margin: 0 12px 0 14px;
}
.tint-row label {
    margin-left: auto;
}
.tint-field {
    display: flex;
    width: 106px;
    height: 42px;
    margin: 0 3px 0 11px;
    padding-right: 14px;
    border-radius: 4px;
    background-color: #dbdbdb;
    color: #666;
}
.tint-field input {
    flex: 1;
    min-width: 0;
}
.tint-field svg {
    width: 9px;
    height: 17px;
}
.tint-row > span {
    margin-right: 58px;
}
.swatch-list {
    flex: 1;
    border: 2px solid #dbdbdb;
    border-width: 2px 2px 2px 1px;
    list-style: none;
}
.swatch-list li {
    display: flex;
    align-items: center;
    gap: 10px;
    height: 44px;
    padding: 0 28px 0 35px;
    border-bottom: 1px solid #dbdbdb;
}
.swatch-list .selected {
    height: 41px;
    background-color: #abd2f0;
    font-weight: 700;
}
.swatch-list .child {
    padding-left: 65px;
}
.swatch-list .group {
    padding-left: 4px;
    gap: 6px;
}
.name {
    flex: 1;
    margin-left: 5px;
    white-space: nowrap;
}
.swatch-list svg, .swatch-list i {
    width: 22px;
    height: 22px;
}
.swatch-list .lock {
    width: 24px;
    height: 24px;
    color: #484848;
}
.swatch-list .twist {
    width: 16px;
    height: 10px;
    color: #444;
}
.swatch-list .folder {
    width: 28px;
    height: 24px;
}
.chip {
    flex: none;
    width: 26px;
    height: 26px;
    margin-bottom: 4px;
    border: 2px solid #606060;
}
.none, .paper {
    background-color: #fff;
}
.registration {
    background-color: #000;
}
.black {
    background-color: #231f20;
}
.cyan {
    background-color: #00aeef;
}
.orange {
    background-color: #ff5500;
}
.panel-foot {
    flex: none;
    display: flex;
    align-items: center;
    height: 48px;
    padding: 0 47px 0 13px;
}
.kinds {
    margin: 0 24px 0 auto;
}
.new-swatch {
    margin: 0 32px;
}
.dock-edge {
    flex: none;
    height: 16px;
    border-top: 4px solid #c8c8c8;
}

/* alert */
.dialog {
    position: absolute;
    left: 864px;
    top: 957px;
    width: 840px;
    display: flex;
    flex-direction: column;
    border-radius: 10px;
    background-color: #ececec;
    box-shadow: 0 0 2px rgba(0, 0, 0, 0.5), 0 26px 70px rgba(0, 0, 0, 0.5);
    font-family: Inter, sans-serif;
    color: #222;
}
.dialog-bar {
    height: 44px;
    border-radius: 10px 10px 0 0;
    background: linear-gradient(#e8e8e8, #cecece);
    border-bottom: 1px solid #a5a5a5;
}
.dialog-body {
    display: flex;
    gap: 47px;
    padding: 35px 59px 0;
}
.app-icon {
    flex: none;
    display: flex;
    align-items: center;
    justify-content: center;
    width: 106px;
    height: 104px;
    margin-top: 9px;
    padding-bottom: 4px;
    border-radius: 22px;
    background-color: #49021f;
    box-shadow: 0 1px 4px rgba(0, 0, 0, 0.4);
    color: #ff3366;
    font-family: "Open Sans", sans-serif;
    font-size: 64px;
    font-weight: 700;
}
.message h2 {
    font-size: 27px;
    font-weight: 700;
    line-height: 30px;
    white-space: nowrap;
}
.message p {
    margin-top: 15px;
    font-size: 22px;
    line-height: 28px;
}
.dialog-actions {
    display: flex;
    justify-content: flex-end;
    padding: 34px 41px 36px;
}
.dialog-actions button {
    width: 156px;
    height: 40px;
    border: 1px solid #2a6fe8;
    border-radius: 6px;
    background: linear-gradient(#6da5ff, #0a68ff);
    box-shadow: 0 0 0 4px #86abf2;
    color: #fff;
    font-size: 25px;
}
```
